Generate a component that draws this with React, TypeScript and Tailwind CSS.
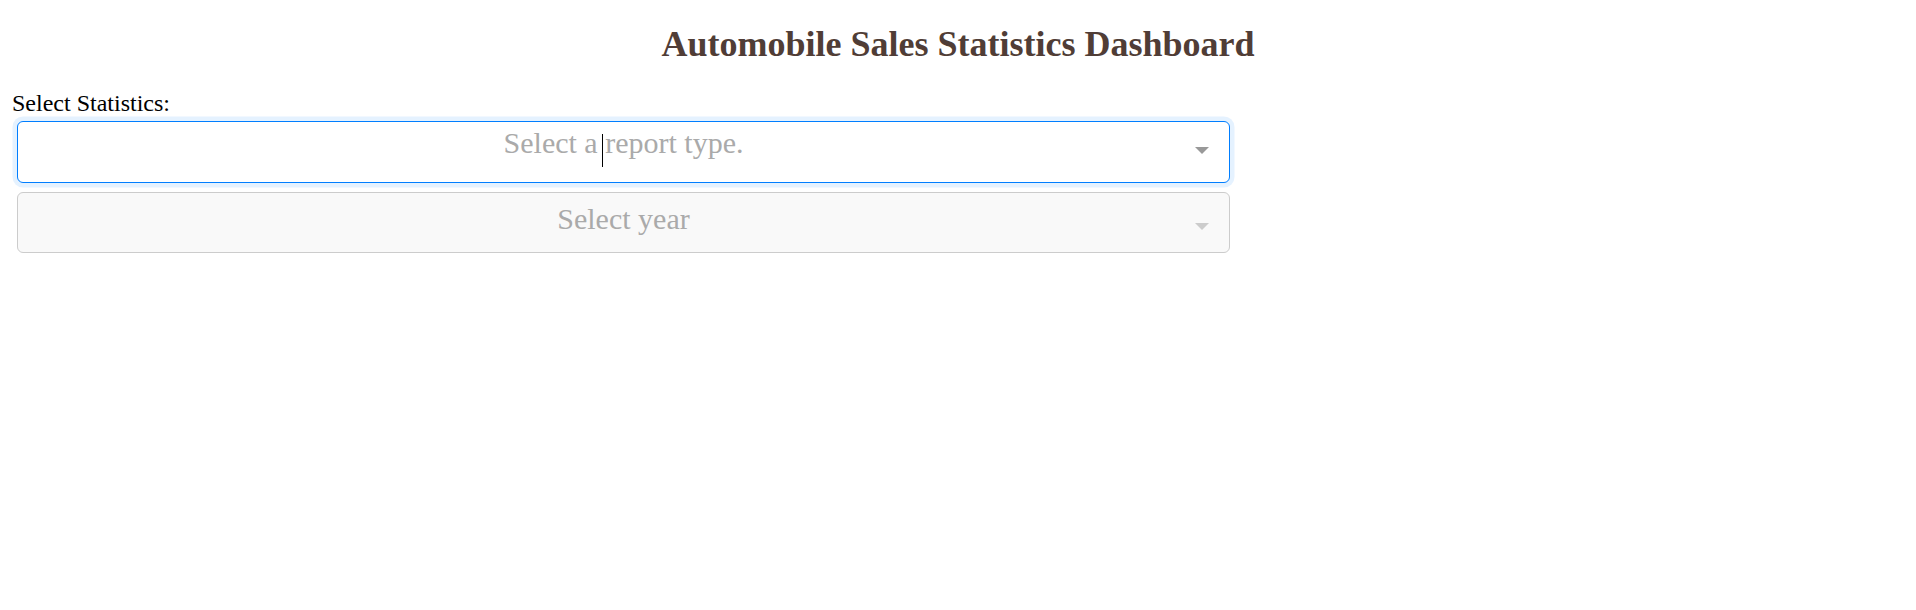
export default function App() {
  return (
    <div className="min-h-screen bg-white font-['Liberation_Serif',serif]">
      <h1 className="pt-[24px] text-center text-[36px] font-bold leading-[40px] text-[#503D36]">
        Automobile Sales Statistics Dashboard
      </h1>

      <div className="mt-[25px] pl-[12px] text-[24px] leading-[28px] text-black">
        Select Statistics:
      </div>

      <div className="flex flex-col gap-[9px] pl-[17px] pt-[4px]">
        {/* focused dropdown */}
        <div className="relative h-[62px] w-[1213px] rounded-[6px] border border-[#007eff] bg-white shadow-[0_0_0_4.5px_rgba(0,126,255,0.1)]">
          <div className="text-center text-[30px] leading-[42px] text-[#aaa]">
            Select a report type.
          </div>
          <span className="absolute left-[584px] top-[12px] h-[33px] w-px bg-black" />
          <span className="absolute right-[20px] top-[25px] h-0 w-0 border-x-[7px] border-t-[7px] border-x-transparent border-t-[#999]" />
        </div>

        {/* disabled dropdown */}
        <div className="relative h-[61px] w-[1213px] rounded-[6px] border border-[#ccc] bg-[#f9f9f9]">
          <div className="text-center text-[30px] leading-[52px] text-[#aaa]">
            Select year
          </div>
          <span className="absolute right-[20px] top-[30px] h-0 w-0 border-x-[7px] border-t-[7px] border-x-transparent border-t-[#ccc]" />
        </div>
      </div>
    </div>
  );
}
